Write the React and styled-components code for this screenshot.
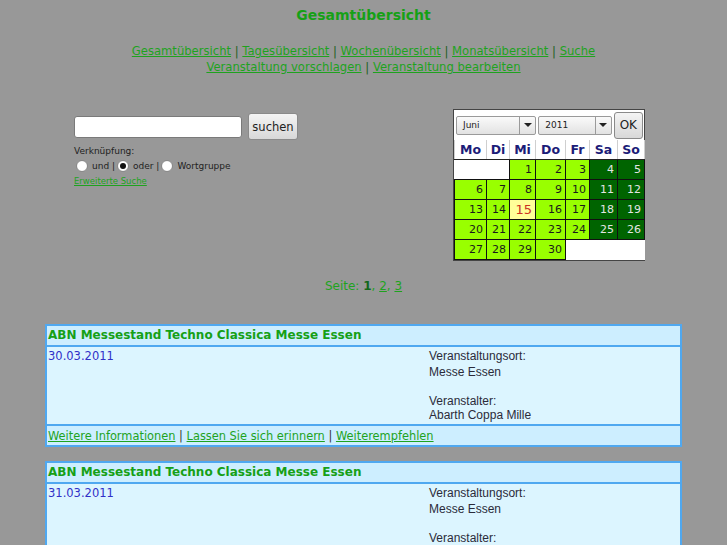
import React from "react";
import styled, { createGlobalStyle } from "styled-components";

const GlobalStyle = createGlobalStyle`
  html, body {
    margin: 0;
    padding: 0;
    background: #989898;
    font-family: "DejaVu Sans", Verdana, sans-serif;
  }
`;

const navLinks = [
  ["Gesamtübersicht", "Tagesübersicht", "Wochenübersicht", "Monatsübersicht", "Suche"],
  ["Veranstaltung vorschlagen", "Veranstaltung bearbeiten"],
];

const colWidths = [32, 23, 26, 30, 24, 28, 27];
const weekDays = ["Mo", "Di", "Mi", "Do", "Fr", "Sa", "So"];
const weeks = [
  [null, null, 1, 2, 3, 4, 5],
  [6, 7, 8, 9, 10, 11, 12],
  [13, 14, 15, 16, 17, 18, 19],
  [20, 21, 22, 23, 24, 25, 26],
  [27, 28, 29, 30, null, null, null],
];

const events = [
  { date: "30.03.2011", place: "Messe Essen", host: "Abarth Coppa Mille" },
  { date: "31.03.2011", place: "Messe Essen", host: "Abarth Coppa Mille" },
];

const Page = styled.div`
  padding-top: 6px;
`;

const Title = styled.h1`
  margin: 0;
  text-align: center;
  font-size: 14px;
  line-height: 18px;
  font-weight: bold;
  color: #16a016;
`;

const Nav = styled.div`
  margin-top: 19px;
  text-align: center;
  font-size: 11.6px;
  line-height: 16px;
  color: #1f5f1f;
`;

const Link = styled.a`
  color: #1ea31e;
  text-decoration: underline;
  cursor: pointer;
`;

const Main = styled.div`
  width: 637px;
  margin: 0 auto;
`;

const TopRow = styled.div`
  margin-top: 34px;
  display: flex;
  justify-content: space-between;
  align-items: flex-start;
  padding: 0 37px 0 29px;
`;

const SearchForm = styled.div`
  padding-top: 4px;
  display: flex;
  flex-direction: column;
`;

const SearchLine = styled.div`
  display: flex;
  align-items: center;
  gap: 6px;
`;

const TextInput = styled.div`
  width: 166px;
  height: 20px;
  background: #fff;
  border: 1px solid #7a7a7a;
  border-radius: 3px;
`;

const Button = styled.div`
  height: ${(p) => p.h || 24}px;
  width: ${(p) => p.w}px;
  display: flex;
  align-items: center;
  justify-content: center;
  background: linear-gradient(#f4f4f4, #d8d8d8);
  border: 1px solid #8a8a8a;
  border-radius: 3px;
  font-size: ${(p) => p.fs || 12}px;
  color: #222;
`;

const SmallLabel = styled.div`
  margin-top: 5px;
  font-size: 9px;
  line-height: 13px;
  color: #222;
`;

const RadioRow = styled.div`
  display: flex;
  align-items: center;
  font-size: 9px;
  line-height: 14px;
  color: #222;
  margin-top: 1px;
`;

const Radio = styled.span`
  width: 10px;
  height: 10px;
  border-radius: 50%;
  border: 1px solid #8a8a8a;
  background: radial-gradient(circle, #fff 55%, #e6e6e6);
  display: inline-flex;
  align-items: center;
  justify-content: center;
  margin: 0 4px 0 2px;

  &::after {
    content: "";
    width: 6px;
    height: 6px;
    border-radius: 50%;
    background: ${(p) => (p.checked ? "#111" : "transparent")};
  }
`;

const SmallLink = styled(Link)`
  margin-top: 2px;
  font-size: 8.5px;
  line-height: 12px;
  display: block;
`;

const Calendar = styled.div`
  width: 190px;
  border: 1px solid #444;
  background: #fff;
`;

const CalTop = styled.div`
  height: 30px;
  display: flex;
  align-items: center;
  padding: 0 1px 0 2px;
  gap: 2px;
`;

const Select = styled.div`
  width: ${(p) => p.w}px;
  height: 17px;
  display: flex;
  border: 1px solid #9a9a9a;
  border-radius: 2px;
  background: linear-gradient(#fafafa, #e2e2e2);
  font-size: 9px;
  color: #222;
`;

const SelectText = styled.span`
  flex: 1;
  display: flex;
  align-items: center;
  padding-left: 6px;
`;

const SelectArrow = styled.span`
  width: 15px;
  border-left: 1px solid #9a9a9a;
  display: flex;
  align-items: center;
  justify-content: center;

  &::after {
    content: "";
    border-left: 4px solid transparent;
    border-right: 4px solid transparent;
    border-top: 4px solid #222;
  }
`;

const CalTable = styled.table`
  border-collapse: collapse;
  table-layout: fixed;
  width: 190px;
`;

const HeadCell = styled.th`
  height: 19px;
  padding: 0;
  font-size: 12.5px;
  font-weight: bold;
  color: #1c1c78;
  text-align: center;
  border: 1px solid #cfcfcf;
  border-top: none;
  border-bottom: 1px solid #222;
`;

const dayBg = (kind) =>
  ({ week: "#99ff00", weekend: "#006400", today: "#ffff99", empty: "#fff" }[kind]);
const dayColor = (kind) =>
  ({ week: "#1a1a1a", weekend: "#e4e4e4", today: "#cc3322", empty: "#fff" }[kind]);

const DayCell = styled.td`
  height: 19px;
  padding: 0 3px 0 0;
  text-align: right;
  font-size: ${(p) => (p.kind === "today" ? 13 : 11)}px;
  background: ${(p) => dayBg(p.kind)};
  color: ${(p) => dayColor(p.kind)};
  border: ${(p) => (p.kind === "empty" ? "none" : "1px solid #111")};
`;

const Pager = styled.div`
  margin-top: 17px;
  text-align: center;
  font-size: 12px;
  line-height: 16px;
  color: #1ea31e;
`;

const Current = styled.b`
  color: #15671a;
`;

const EventBox = styled.div`
  margin-top: ${(p) => (p.first ? 30 : 14)}px;
  border: 2px solid #4fa8f0;
  background: #dcf5ff;
`;

const EventHead = styled.div`
  height: 19px;
  line-height: 18px;
  padding-left: 1px;
  background: #cdeeff;
  border-bottom: 2px solid #4fa8f0;
  font-size: 12px;
  font-weight: bold;
  color: #16a016;
`;

const EventBody = styled.div`
  display: grid;
  grid-template-columns: 381px 1fr;
  height: 76px;
  padding-top: 1px;
`;

const EventDate = styled.div`
  padding-left: 1px;
  font-size: 11.5px;
  line-height: 16px;
  color: #3030c8;
`;

const InfoCol = styled.div`
  font-family: "Liberation Sans", Arial, sans-serif;
  font-size: 12px;
  line-height: 14px;
  color: #2b2b3a;
  padding-left: 1px;
`;

const InfoLine = styled.div`
  margin-top: ${(p) => p.mt || 0}px;
`;

const EventFoot = styled.div`
  height: 19px;
  line-height: 20px;
  padding-left: 1px;
  background: #cdeeff;
  border-top: 2px solid #4fa8f0;
  font-size: 11.4px;
  color: #333;
  white-space: nowrap;
`;

const Sep = () => <> | </>;

const App = () => {
  return (
    <Page>
      <GlobalStyle />
      <Title>Gesamtübersicht</Title>
      <Nav>
        {navLinks.map((line, i) => (
          <div key={i}>
            {line.map((label, j) => (
              <React.Fragment key={label}>
                {j > 0 && <Sep />}
                <Link>{label}</Link>
              </React.Fragment>
            ))}
          </div>
        ))}
      </Nav>

      <Main>
        <TopRow>
          <SearchForm>
            <SearchLine>
              <TextInput />
              <Button h={25} w={48} fs={11.5}>suchen</Button>
            </SearchLine>
            <SmallLabel>Verknüpfung:</SmallLabel>
            <RadioRow>
              <Radio />und |
              <Radio checked />oder |
              <Radio />Wortgruppe
            </RadioRow>
            <SmallLink>Erweiterte Suche</SmallLink>
          </SearchForm>

          <Calendar>
            <CalTop>
              <Select w={80}>
                <SelectText>Juni</SelectText>
                <SelectArrow />
              </Select>
              <Select w={73}>
                <SelectText>2011</SelectText>
                <SelectArrow />
              </Select>
              <Button h={25} w={28} fs={12}>OK</Button>
            </CalTop>
            <CalTable>
              <colgroup>
                {colWidths.map((w, i) => (
                  <col key={i} style={{ width: w }} />
                ))}
              </colgroup>
              <thead>
                <tr>
                  {weekDays.map((d) => (
                    <HeadCell key={d}>{d}</HeadCell>
                  ))}
                </tr>
              </thead>
              <tbody>
                {weeks.map((week, wi) => (
                  <tr key={wi}>
                    {week.map((day, di) => {
                      let kind = "week";
                      if (day === null) kind = "empty";
                      else if (day === 15) kind = "today";
                      else if (di >= 5) kind = "weekend";
                      return (
                        <DayCell key={di} kind={kind}>
                          {day}
                        </DayCell>
                      );
                    })}
                  </tr>
                ))}
              </tbody>
            </CalTable>
          </Calendar>
        </TopRow>

        <Pager>
          Seite: <Current>1</Current>, <Link>2</Link>, <Link>3</Link>
        </Pager>

        {events.map((ev, i) => (
          <EventBox key={i} first={i === 0}>
            <EventHead>ABN Messestand Techno Classica Messe Essen</EventHead>
            <EventBody>
              <EventDate>{ev.date}</EventDate>
              <div>
                <InfoCol>
                  <InfoLine mt={1}>Veranstaltungsort:</InfoLine>
                  <InfoLine mt={2}>{ev.place}</InfoLine>
                  <InfoLine mt={15}>Veranstalter:</InfoLine>
                  <InfoLine>{ev.host}</InfoLine>
                </InfoCol>
              </div>
            </EventBody>
            <EventFoot>
              <Link>Weitere Informationen</Link>
              <Sep />
              <Link>Lassen Sie sich erinnern</Link>
              <Sep />
              <Link>Weiterempfehlen</Link>
            </EventFoot>
          </EventBox>
        ))}
      </Main>
    </Page>
  );
};

export default App;
